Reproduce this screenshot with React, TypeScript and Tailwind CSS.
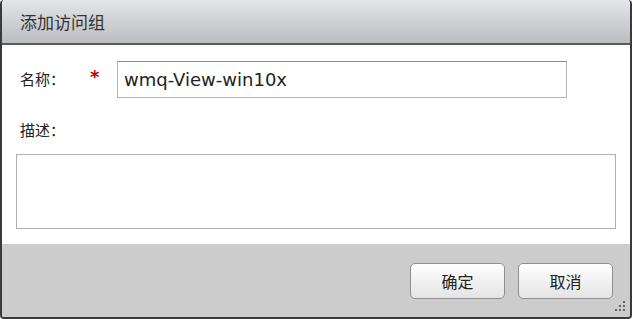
import React from 'react'

const cjk = { fontFamily: '"Noto Sans CJK SC", "Liberation Sans", sans-serif' }
const latin = { fontFamily: '"DejaVu Sans", "Noto Sans CJK SC", sans-serif' }

function GripDots() {
  return (
    <svg width="12" height="12" viewBox="0 0 12 12" className="absolute right-[3px] bottom-[4px]">
      <rect x="8" y="0" width="2" height="2" fill="#666" />
      <rect x="4" y="4" width="2" height="2" fill="#666" />
      <rect x="8" y="4" width="2" height="2" fill="#666" />
      <rect x="0" y="8" width="2" height="2" fill="#666" />
      <rect x="4" y="8" width="2" height="2" fill="#666" />
      <rect x="8" y="8" width="2" height="2" fill="#666" />
    </svg>
  )
}

function FooterButton({ children }: { children: React.ReactNode }) {
  return (
    <button
      className="w-[95px] h-[36px] rounded-[5px] border border-[#8f8f8f] bg-gradient-to-b from-[#ffffff] to-[#e4e4e4] text-[16px] text-[#222] flex items-center justify-center"
      style={cjk}
    >
      {children}
    </button>
  )
}

export default function App() {
  return (
    <div className="w-[634px] h-[319px] bg-white">
      <div className="w-[632px] h-[319px] flex flex-col rounded-[4px] border-l-2 border-r-2 border-b-2 border-[#3a3a3a] overflow-hidden">
        {/* title bar */}
        <div
          className="h-[45px] flex items-center pl-[18px] bg-gradient-to-b from-[#e4e5e8] to-[#bcbdbf] border-b-2 border-[#5a5a5a] rounded-t-[4px] text-[17px] text-[#333]"
          style={cjk}
        >
          添加访问组
        </div>

        {/* body */}
        <div className="h-[199px] bg-white flex flex-col px-[14px]">
          <div className="flex items-center mt-[16px] h-[37px]">
            <span className="w-[74px] pl-[4px] text-[15px] text-[#222]" style={cjk}>名称：</span>
            <span className="w-[27px] text-[#c00000] text-[18px] font-bold leading-none pb-[6px]" style={latin}>*</span>
            <div className="w-[450px] h-[37px] border border-[#b5b5b5] border-t-[#8a8a8a] flex items-center pl-[6px] text-[18px] text-[#222]" style={latin}>
              wmq-View-win10x
            </div>
          </div>
          <div className="mt-[21px] pl-[4px] text-[15px] leading-[22px] text-[#222]" style={cjk}>描述：</div>
          <div className="mt-[13px] w-[600px] h-[75px] border border-[#b0b0b0] bg-white" />
        </div>

        {/* footer */}
        <div className="relative flex-1 bg-[#cccccc] flex justify-end items-start pt-[19px] pr-[17px] gap-[13px]">
          <FooterButton>确定</FooterButton>
          <FooterButton>取消</FooterButton>
          <GripDots />
        </div>
      </div>
    </div>
  )
}
